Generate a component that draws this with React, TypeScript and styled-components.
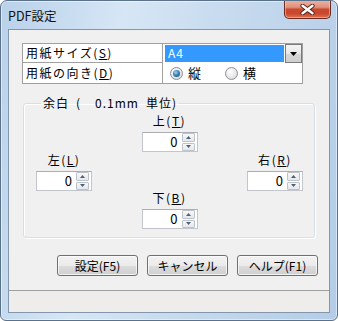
import React from "react";
import styled, { createGlobalStyle } from "styled-components";

const GlobalStyle = createGlobalStyle`
  html, body { margin: 0; padding: 0; background: #ffffff; }
  body {
    font-family: "Noto Sans CJK JP", "Noto Sans", sans-serif;
    font-size: 12px;
    color: #000;
  }
  * { box-sizing: border-box; }
`;

const Window = styled.div`
  width: 338px;
  height: 321px;
  border: 1px solid #5a728c;
  border-radius: 7px 7px 6px 6px;
  background: linear-gradient(100deg, #b9d1ea 0%, #d6e6f5 32%, #c9dcef 55%, #b4cce7 100%);
  box-shadow: inset 0 0 0 1px rgba(255, 255, 255, 0.5);
  display: flex;
  flex-direction: column;
  overflow: hidden;
`;

const TitleBar = styled.div`
  height: 28px;
  display: flex;
  align-items: flex-start;
  justify-content: space-between;
  padding-left: 7px;
`;

const Title = styled.span`
  font-size: 12.5px;
  line-height: 14px;
  margin-top: 8px;
  color: #111;
`;

const CloseButton = styled.div`
  width: 47px;
  height: 19px;
  margin-top: -1px;
  margin-right: 6px;
  border: 1px solid #6b2b20;
  border-top: none;
  border-radius: 0 0 5px 5px;
  background: linear-gradient(
    180deg,
    #ecb4a6 0%,
    #e0917c 40%,
    #c94a2f 52%,
    #c9482d 75%,
    #dd7352 100%
  );
  box-shadow: inset 0 0 0 1px rgba(255, 220, 210, 0.45);
  display: flex;
  align-items: center;
  justify-content: center;
`;

const Client = styled.div`
  flex: 1;
  margin: 0 7px 7px 7px;
  border: 1px solid #8396aa;
  background: #f0f0f0;
  display: flex;
  flex-direction: column;
`;

const Table = styled.div`
  margin: 13px 0 0 13px;
  width: 281px;
  display: grid;
  grid-template-columns: 139px 139px;
  grid-template-rows: 18px 20px;
  gap: 1px;
  padding: 1px;
  background: #a0a0a0;
`;

const Cell = styled.div`
  background: #ffffff;
  display: flex;
  align-items: center;
  padding-left: 3px;
  font-size: 12px;
  line-height: 14px;
  letter-spacing: 1.5px;
  white-space: nowrap;
`;

const SelectCell = styled.div`
  background: #ffffff;
  display: flex;
  align-items: stretch;
  margin-bottom: -1px;
`;

const SelectValue = styled.div`
  flex: 1;
  margin: 1px 1px 1px 2px;
  background: #3399ff;
  color: #ffffff;
  font-size: 12px;
  line-height: 16px;
  letter-spacing: 1px;
  padding-left: 3px;
`;

const DropButton = styled.div`
  width: 17px;
  border: 1px solid #7a7a7a;
  background: linear-gradient(180deg, #f4f4f4 0%, #e8e8e8 50%, #d6d6d6 51%, #cfcfcf 100%);
  display: flex;
  align-items: center;
  justify-content: center;
`;

const RadioCell = styled.div`
  background: #ffffff;
  display: flex;
  align-items: center;
  padding-left: 7px;
`;

const RadioOption = styled.label<{ $width: number }>`
  width: ${(p) => p.$width}px;
  display: flex;
  align-items: center;
  gap: 5px;
  font-size: 13px;
  line-height: 14px;
`;

const RadioCircle = styled.span<{ $checked?: boolean }>`
  width: 13px;
  height: 13px;
  border-radius: 50%;
  border: 1px solid #8c8f94;
  background: radial-gradient(circle at 40% 35%, #ffffff 0%, #e6e6e6 60%, #c9c9c9 100%);
  display: flex;
  align-items: center;
  justify-content: center;
  &::after {
    content: "";
    display: ${(p) => (p.$checked ? "block" : "none")};
    width: 7px;
    height: 7px;
    border-radius: 50%;
    background: radial-gradient(circle at 40% 35%, #9fd6f5 0%, #3f86b8 45%, #123e62 100%);
  }
`;

const Underline = styled.span`
  text-decoration: underline;
  text-underline-offset: 1px;
`;

const Group = styled.fieldset`
  margin: 12px 0 0 14px;
  width: 292px;
  padding: 4px 11px 8px 12px;
  border: 1px solid #d5dfe5;
  border-radius: 3px;
  box-shadow: inset 1px 1px 0 #ffffff, 1px 1px 0 #ffffff;
  min-width: 0;
`;

const Legend = styled.legend`
  margin-left: 5px;
  padding: 0 2px;
  font-size: 12px;
  line-height: 14px;
  letter-spacing: 1px;
  white-space: pre;
`;

const MarginGrid = styled.div`
  display: grid;
  grid-template-columns: 56px 1fr 56px;
  grid-template-rows: 39px 38px 38px;
  grid-template-areas:
    ". top ."
    "left . right"
    ". bottom .";
`;

const Field = styled.div<{ $area: string }>`
  grid-area: ${(p) => p.$area};
  display: flex;
  flex-direction: column;
  align-items: center;
  gap: 4px;
`;

const FieldLabel = styled.span`
  font-size: 12px;
  line-height: 14px;
  letter-spacing: 1.5px;
  white-space: nowrap;
`;

const SpinBox = styled.div`
  width: 56px;
  height: 20px;
  background: #ffffff;
  border: 1px solid #c2c5cc;
  border-top-color: #abadb3;
  display: flex;
  align-items: stretch;
  padding: 0 1px 0 0;
`;

const SpinValue = styled.div`
  flex: 1;
  text-align: right;
  padding-right: 4px;
  font-size: 13px;
  line-height: 18px;
`;

const SpinButtons = styled.div`
  width: 13px;
  display: flex;
  flex-direction: column;
  margin: 0 1px 0 0;
  gap: 1px;
`;

const SpinHalf = styled.div`
  flex: 1;
  border: 1px solid #bcc3cb;
  border-radius: 1px;
  background: linear-gradient(180deg, #f7f7f7 0%, #e6e8eb 100%);
  display: flex;
  align-items: center;
  justify-content: center;
`;

const ButtonRow = styled.div`
  margin-top: 17px;
  display: flex;
  justify-content: flex-end;
  gap: 9px;
  padding-right: 11px;
`;

const PushButton = styled.button`
  width: 81px;
  height: 21px;
  padding: 0;
  border: 1px solid #707070;
  border-radius: 3px;
  background: linear-gradient(180deg, #f2f2f2 0%, #ebebeb 50%, #dddddd 51%, #cfcfcf 100%);
  box-shadow: inset 0 0 0 1px rgba(255, 255, 255, 0.7);
  font-family: "Noto Sans CJK JP", "Noto Sans", sans-serif;
  font-size: 12px;
  line-height: 17px;
  color: #000;
`;

const StatusBar = styled.div`
  margin-top: auto;
  height: 22px;
  border-top: 1px solid #a0a0a0;
  background: #efecec;
`;

const Arrow = ({ up }: { up?: boolean }) => (
  <svg width="5" height="3" viewBox="0 0 5 3">
    <path d={up ? "M2.5 0 L5 3 L0 3 Z" : "M0 0 L5 0 L2.5 3 Z"} fill="#4d6079" />
  </svg>
);

const Spinner = ({ value }: { value: string }) => (
  <SpinBox>
    <SpinValue>{value}</SpinValue>
    <SpinButtons>
      <SpinHalf>
        <Arrow up />
      </SpinHalf>
      <SpinHalf>
        <Arrow />
      </SpinHalf>
    </SpinButtons>
  </SpinBox>
);

const MarginField = ({ area, text, keyChar }: { area: string; text: string; keyChar: string }) => (
  <Field $area={area}>
    <FieldLabel>
      {text}(<Underline>{keyChar}</Underline>)
    </FieldLabel>
    <Spinner value="0" />
  </Field>
);

export default function App() {
  return (
    <>
      <GlobalStyle />
      <Window>
        <TitleBar>
          <Title>PDF設定</Title>
          <CloseButton>
            <svg width="15" height="11" viewBox="0 0 15 11">
              <path
                d="M2.5 1.8 L12.5 9.2 M12.5 1.8 L2.5 9.2"
                stroke="#5a2018"
                strokeWidth="4.2"
                strokeLinecap="round"
              />
              <path
                d="M2.5 1.8 L12.5 9.2 M12.5 1.8 L2.5 9.2"
                stroke="#ffffff"
                strokeWidth="2.4"
                strokeLinecap="round"
              />
            </svg>
          </CloseButton>
        </TitleBar>
        <Client>
          <Table>
            <Cell>
              用紙サイズ(<Underline>S</Underline>)
            </Cell>
            <SelectCell>
              <SelectValue>A4</SelectValue>
              <DropButton>
                <svg width="7" height="4" viewBox="0 0 7 4">
                  <path d="M0 0 L7 0 L3.5 4 Z" fill="#000" />
                </svg>
              </DropButton>
            </SelectCell>
            <Cell>
              用紙の向き(<Underline>D</Underline>)
            </Cell>
            <RadioCell>
              <RadioOption $width={55}>
                <RadioCircle $checked />
                縦
              </RadioOption>
              <RadioOption $width={60}>
                <RadioCircle />
                横
              </RadioOption>
            </RadioCell>
          </Table>

          <Group>
            <Legend>{"余白\u2002(\u2002\u20020.1mm\u2002単位)"}</Legend>
            <MarginGrid>
              <MarginField area="top" text="上" keyChar="T" />
              <MarginField area="left" text="左" keyChar="L" />
              <MarginField area="right" text="右" keyChar="R" />
              <MarginField area="bottom" text="下" keyChar="B" />
            </MarginGrid>
          </Group>

          <ButtonRow>
            <PushButton>設定(F5)</PushButton>
            <PushButton>キャンセル</PushButton>
            <PushButton>ヘルプ(F1)</PushButton>
          </ButtonRow>

          <StatusBar />
        </Client>
      </Window>
    </>
  );
}
